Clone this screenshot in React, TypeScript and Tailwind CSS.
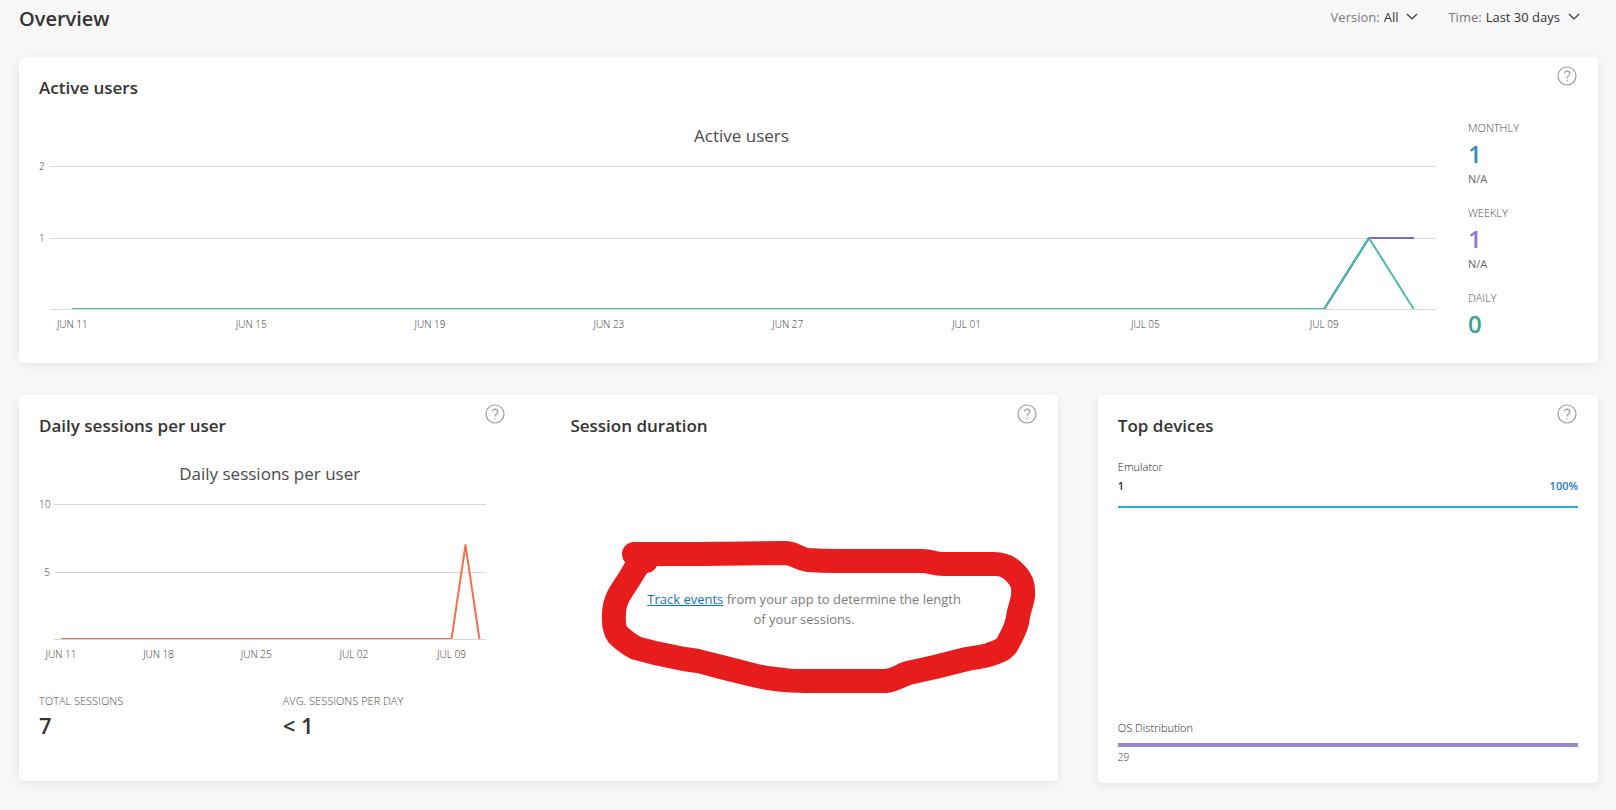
import { useId, useState } from "react";

type Series = { color: string; values: number[] };

const DAYS = 31;

// a flat month with only the last days filled in
const month = (...tail: number[]) => [
  ...Array(DAYS - tail.length).fill(0),
  ...tail,
];

const activeUsers: Series[] = [
  { color: "#3a96bd", values: month(1, 1) },
  { color: "#7e6bc4", values: month(1, 1) },
  { color: "#4bbbaa", values: month(1, 0) },
];

const dailySessions: Series[] = [
  { color: "#f56f51", values: month(7, 0) },
];

function HelpButton({ topic }: { topic: string }) {
  return (
    <button
      type="button"
      aria-label={`Help: ${topic}`}
      className="flex size-[22px] shrink-0 items-center justify-center text-[#9a9a9a]"
    >
      <svg width="20" height="20" viewBox="0 0 20 20" fill="none" stroke="currentColor">
        <circle cx="10" cy="10" r="9" strokeWidth="1.2" />
        <path d="M7.4 7.6c0-1.5 1.1-2.5 2.7-2.5s2.7 1 2.7 2.4c0 1.1-.6 1.7-1.4 2.4-.8.7-1.3 1.2-1.3 2.2v.5" strokeWidth="1.1" />
        <circle cx="10.1" cy="14.6" r="0.7" fill="currentColor" stroke="none" />
      </svg>
    </button>
  );
}

function PanelHeader({ title }: { title: string }) {
  return (
    <div className="flex items-start justify-between pt-2">
      <h2 className="pt-3 text-[17px] leading-[22px] font-semibold text-[#333333]">
        {title}
      </h2>
      <HelpButton topic={title} />
    </div>
  );
}

function Filter({ label, options }: { label: string; options: string[] }) {
  const id = useId();
  const [value, setValue] = useState(options[0]);

  return (
    <div className="flex items-center gap-1 text-[13px] leading-6">
      <label htmlFor={id} className="text-[#7a7a7a]">
        {label}:
      </label>
      <div className="relative flex items-center">
        <select
          id={id}
          value={value}
          onChange={(e) => setValue(e.target.value)}
          className="field-sizing-content appearance-none bg-transparent pr-5 text-[#333333] outline-none"
        >
          {options.map((option) => (
            <option key={option}>{option}</option>
          ))}
        </select>
        <svg
          className="pointer-events-none absolute right-0"
          width="12"
          height="8"
          viewBox="0 0 12 8"
          fill="none"
          stroke="#333333"
          strokeWidth="1.2"
        >
          <path d="M1 1l5 5 5-5" />
        </svg>
      </div>
    </div>
  );
}

function LineChart({
  title,
  height,
  max,
  series,
  labels,
  step,
  className,
  plotClassName,
  axisClassName,
}: {
  title: string;
  height: number;
  max: number;
  series: Series[];
  labels: string[];
  step: number;
  className: string;
  plotClassName: string;
  axisClassName: string;
}) {
  const base = height - 1;
  const y = (v: number) => Math.round(base - (v / max) * base);

  return (
    <div className={`mt-[25px] ${className}`}>
      <h3 className="text-center text-[17px] leading-6 text-[#4a4a4a]">
        {title}
      </h3>
      <div className={`mt-[18px] flex items-start ${plotClassName}`}>
        <div
          className={`-my-[5px] flex shrink-0 flex-col justify-between text-right text-[10px] leading-[10px] font-light text-[#333333] ${axisClassName}`}
          style={{ height: height + 10 }}
        >
          <span>{max}</span>
          <span>{max / 2}</span>
          <span className="invisible">0</span>
        </div>
        <div className="min-w-0 flex-1">
          <svg
            className="block w-full"
            height={height}
            viewBox={`0 0 ${DAYS} ${height}`}
            preserveAspectRatio="none"
            fill="none"
            role="img"
            aria-label={title}
          >
            {[max, max / 2].map((v) => (
              <rect key={v} x="0" y={y(v)} width={DAYS} height="1" fill="#d8d8d8" />
            ))}
            {series.map((s) => (
              <polyline
                key={s.color}
                points={s.values.map((v, i) => `${i + 0.5},${y(v)}`).join(" ")}
                stroke={s.color}
                strokeWidth="2"
                strokeLinejoin="round"
                vectorEffect="non-scaling-stroke"
              />
            ))}
            <rect x="0" y={base} width={DAYS} height="1" fill="#d8d8d8" />
          </svg>
          <div className="mt-2 grid grid-cols-[repeat(31,minmax(0,1fr))] text-[10px] leading-3 font-light text-[#333333]">
            {labels.map((label, i) => (
              <span
                key={label}
                className="flex justify-center whitespace-nowrap"
                style={{ gridColumnStart: i * step + 1, gridRowStart: 1 }}
              >
                {label}
              </span>
            ))}
          </div>
        </div>
      </div>
    </div>
  );
}

function ActiveUsers() {
  return (
    <section className="rounded bg-white px-5 pb-[22px] shadow-[0_2px_8px_rgba(0,0,0,0.08)]">
      <PanelHeader title="Active users" />
      <div className="flex gap-6">
        <LineChart
          title="Active users"
          height={144}
          max={2}
          series={activeUsers}
          labels={["JUN 11", "JUN 15", "JUN 19", "JUN 23", "JUN 27", "JUL 01", "JUL 05", "JUL 09"]}
          step={4}
          className="min-w-0 flex-1"
          plotClassName="pr-2"
          axisClassName="w-[11px] pr-[6px]"
        />
        <dl className="flex w-[110px] shrink-0 flex-col gap-[17px] pt-5">
          <div>
            <dt className="text-[11px] leading-[18px] font-light text-[#4a4a4a]">MONTHLY</dt>
            <dd className="text-[24px] leading-[34px] font-semibold text-[#3192b8]">1</dd>
            <dd className="text-[11px] leading-4 text-[#666666]">N/A</dd>
          </div>
          <div>
            <dt className="text-[11px] leading-[18px] font-light text-[#4a4a4a]">WEEKLY</dt>
            <dd className="text-[24px] leading-[34px] font-semibold text-[#9378cd]">1</dd>
            <dd className="text-[11px] leading-4 text-[#666666]">N/A</dd>
          </div>
          <div>
            <dt className="text-[11px] leading-[18px] font-light text-[#4a4a4a]">DAILY</dt>
            <dd className="text-[24px] leading-[34px] font-semibold text-[#38a393]">0</dd>
          </div>
        </dl>
      </div>
    </section>
  );
}

function Sessions() {
  return (
    <section className="grid grid-cols-2 gap-16 rounded bg-white px-5 shadow-[0_2px_8px_rgba(0,0,0,0.08)]">
      <div className="min-w-0 pb-[41px]">
        <PanelHeader title="Daily sessions per user" />
        <LineChart
          title="Daily sessions per user"
          height={136}
          max={10}
          series={dailySessions}
          labels={["JUN 11", "JUN 18", "JUN 25", "JUL 02", "JUL 09"]}
          step={7}
          className="mr-[6px]"
          plotClassName="pr-[14px]"
          axisClassName="w-[15px] pr-1"
        />
        <dl className="mt-8 grid grid-cols-2 gap-5">
          <div>
            <dt className="text-[11px] leading-[18px] font-light text-[#4a4a4a]">TOTAL SESSIONS</dt>
            <dd className="text-[22px] leading-[30px] font-semibold text-[#333333]">7</dd>
          </div>
          <div>
            <dt className="text-[11px] leading-[18px] font-light text-[#4a4a4a]">AVG. SESSIONS PER DAY</dt>
            <dd className="text-[22px] leading-[30px] font-semibold text-[#333333]">&lt; 1</dd>
          </div>
        </dl>
      </div>

      <div className="flex min-w-0 flex-col">
        <PanelHeader title="Session duration" />
        <div className="flex flex-1 items-center justify-center">
          <div className="relative w-[326px]">
            <p className="text-center text-[13px] leading-5 text-[#7a7a7a]">
              <a href="#events" className="text-[#0f74c8] underline">
                Track events
              </a>{" "}
              from your app to determine the length of your sessions.
            </p>
            {/* marker ring around the message */}
            <svg
              className="pointer-events-none absolute -top-[48px] -left-[41px] max-w-none"
              width="436"
              height="153"
              viewBox="600 541 436 153"
              fill="none"
              stroke="#e71d1d"
              strokeWidth="24"
              strokeLinecap="round"
              strokeLinejoin="round"
            >
              <path d="M634 554 L700 554 L786 553 C797 554 798 559 808 560 Q822 561 836 561 L922 561 C932 561 932 564 944 564 L994 564 C1004 564 1010 567 1016 574 C1022 580 1024 586 1023 596 C1022 604 1019 609 1018 617 C1017 627 1013 633 1008 643 C1005 649 1000 651 991 654 C984 657 976 657 967 659 L935 667 L908 673 C899 676 896 680 886 681 L805 681 Q790 681 784 680 Q764 678 753 675 L725 668 L698 661 L684 659 L655 653 L636 648 Q628 644 618 635 Q613 629 614 613 Q614 606 618 597 C622 589 628 582 634 571 L640 562 L646 561" />
            </svg>
          </div>
        </div>
      </div>
    </section>
  );
}

function TopDevices() {
  return (
    <section className="flex min-h-[388px] flex-col rounded bg-white px-5 pb-4 shadow-[0_2px_8px_rgba(0,0,0,0.08)]">
      <PanelHeader title="Top devices" />
      <div className="mt-[21px]">
        <p className="text-[11px] leading-[18px] font-light text-[#212121]">Emulator</p>
        <div className="flex justify-between text-[11px] leading-5 font-semibold">
          <span className="text-[#333333]">1</span>
          <span className="text-[#1a7ad0]">100%</span>
        </div>
        <div className="mt-[10px] h-[2px] bg-[#22aed1]" />
      </div>
      <div className="mt-auto">
        <p className="text-[11px] leading-[18px] font-light text-[#212121]">OS Distribution</p>
        <div className="mt-[6px] h-1 bg-[#9b87cc]" />
        <p className="text-[10px] leading-5 font-light text-[#333333]">29</p>
      </div>
    </section>
  );
}

export default function App() {
  return (
    <div className="min-h-screen bg-[#f7f7f7] pr-[18px] pb-6 pl-[19px] font-['Open_Sans','Noto_Sans',sans-serif]">
      <header className="flex h-[57px] items-start justify-between pt-[5px] pr-[18px]">
        <h1 className="text-[20px] leading-7 font-semibold text-[#333333]">Overview</h1>
        <div className="flex gap-[30px]">
          <Filter label="Version" options={["All"]} />
          <Filter label="Time" options={["Last 30 days", "Last 7 days"]} />
        </div>
      </header>

      <main className="flex flex-col gap-8">
        <ActiveUsers />
        <div className="grid grid-cols-[27fr_13fr] items-start gap-10">
          <Sessions />
          <TopDevices />
        </div>
      </main>
    </div>
  );
}
